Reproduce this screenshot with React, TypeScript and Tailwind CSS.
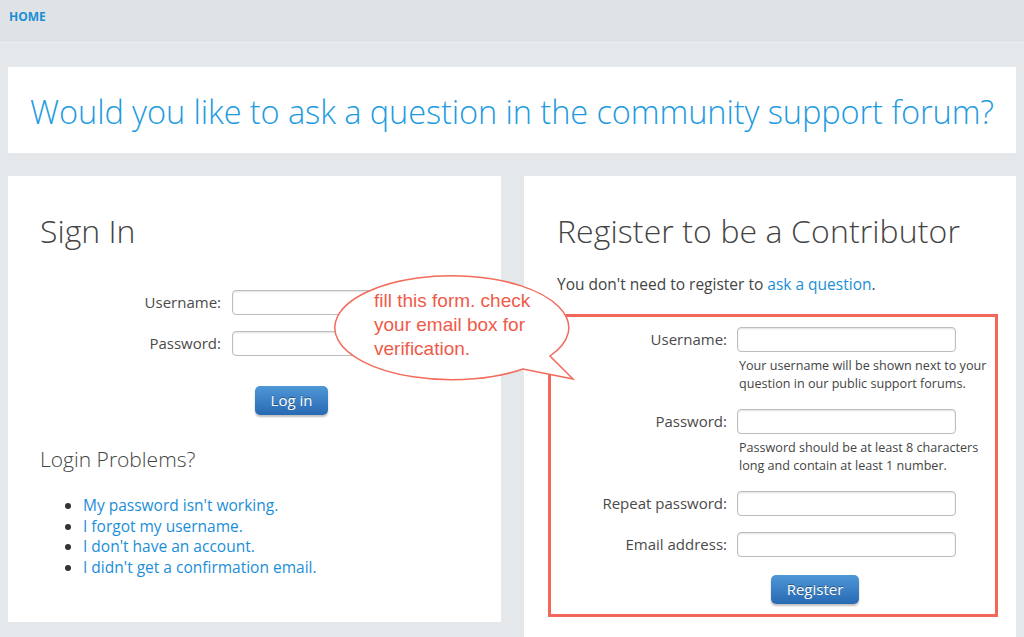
import React from "react";

const font = { fontFamily: '"Open Sans", "Liberation Sans", sans-serif' };

function Field({ label }: { label: string }) {
  return (
    <>
      <label className="text-right text-[15px] text-[#4a4a4a] self-center leading-[25px]">{label}</label>
      <input className="h-[25px] w-[219px] rounded-[4px] border border-[#bdbdbd] bg-white shadow-[inset_0_1px_2px_rgba(0,0,0,0.12)] outline-none" />
    </>
  );
}

function Hint({ children }: { children: React.ReactNode }) {
  return (
    <>
      <div />
      <p className="pl-[2px] mt-[5px] mb-[16px] whitespace-nowrap text-[12.6px] leading-[18px] text-[#444]">{children}</p>
    </>
  );
}

function BlueButton({ children, className }: { children: React.ReactNode; className?: string }) {
  return (
    <button
      className={
        "h-[29px] rounded-[5px] bg-gradient-to-b from-[#4f97d6] to-[#2869b3] text-white text-[15px] [text-shadow:0_-1px_0_rgba(0,0,0,0.35)] shadow-[0_2px_2px_rgba(0,0,0,0.25)] " +
        (className ?? "")
      }
    >
      {children}
    </button>
  );
}

export default function App() {
  return (
    <div className="relative min-h-[637px] bg-[#e4e8eb] overflow-hidden" style={font}>
      <div className="h-[43px] bg-[#dfe3e6] border-b border-[#eceff1] flex items-start pt-[8px] px-[9px]">
        <a className="text-[12px] font-bold text-[#1b8ed8]">HOME</a>
      </div>

      <div className="px-[8px]">
        <div className="mt-[24px] h-[86px] pt-[4px] bg-white flex items-center justify-center">
          <h1 className="text-[32.6px] font-light text-[#1e9be0] tracking-[-0.1px]">
            Would you like to ask a question in the community support forum?
          </h1>
        </div>

        <div className="mt-[23px] grid grid-cols-[493px_492px] gap-x-[23px] items-start">
          {/* sign in */}
          <div className="bg-white h-[446px] pl-[32px] pt-[32px]">
            <h2 className="text-[32px] font-light text-[#444] leading-[45px]">Sign In</h2>
            <div className="mt-[37px] grid grid-cols-[181px_219px] gap-x-[11px] gap-y-[16px]">
              <Field label="Username:" />
              <Field label="Password:" />
              <div />
              <div>
                <BlueButton className="ml-[23px] mt-[14px] w-[73px]">Log in</BlueButton>
              </div>
            </div>
            <h3 className="mt-[29px] text-[21px] font-light text-[#444] leading-[30px]">Login Problems?</h3>
            <ul className="mt-[21px] pl-[43px] list-disc text-[15.5px] leading-[20.5px] text-[#1b8ed8] marker:text-[#333]">
              <li><a>My password isn't working.</a></li>
              <li><a>I forgot my username.</a></li>
              <li><a>I don't have an account.</a></li>
              <li><a>I didn't get a confirmation email.</a></li>
            </ul>
          </div>

          {/* register */}
          <div className="bg-white h-[480px] pl-[33px] pt-[32px]">
            <h2 className="text-[32px] font-light text-[#444] leading-[45px] tracking-[0.1px]">Register to be a Contributor</h2>
            <p className="mt-[21px] text-[15.5px] leading-[21px] text-[#444]">
              You don't need to register to <a className="text-[#1b8ed8]">ask a question</a>.
            </p>
            <div className="mt-[19px] ml-[-9px] w-[450px] border-[3px] border-[#f2675a] pt-[10px] pb-[10px]">
              <div className="grid grid-cols-[176px_219px] gap-x-[10px]">
                <Field label="Username:" />
                <Hint>
                  Your username will be shown next to your
                  <br />
                  question in our public support forums.
                </Hint>
                <Field label="Password:" />
                <Hint>
                  Password should be at least 8 characters
                  <br />
                  long and contain at least 1 number.
                </Hint>
                <Field label="Repeat password:" />
                <div className="col-span-2 h-[16px]" />
                <Field label="Email address:" />
                <div />
                <div>
                  <BlueButton className="ml-[34px] mt-[18px] w-[88px]">Register</BlueButton>
                </div>
              </div>
            </div>
          </div>
        </div>
      </div>

      {/* speech bubble annotation */}
      <svg className="absolute left-0 top-0 pointer-events-none" width="1024" height="637">
        <path
          d="M 550 356 A 117 52 0 1 0 523 369 L 573 379 Z"
          fill="white"
          stroke="#f36b5c"
          strokeWidth="1.5"
          strokeLinejoin="miter"
        />
      </svg>
      <div
        className="absolute left-[374px] top-[289px] text-[19px] leading-[24px] text-[#f05a4a]"
        style={{ fontFamily: '"Liberation Sans", Arial, sans-serif' }}
      >
        fill this form. check
        <br />
        your email box for
        <br />
        verification.
      </div>
    </div>
  );
}
